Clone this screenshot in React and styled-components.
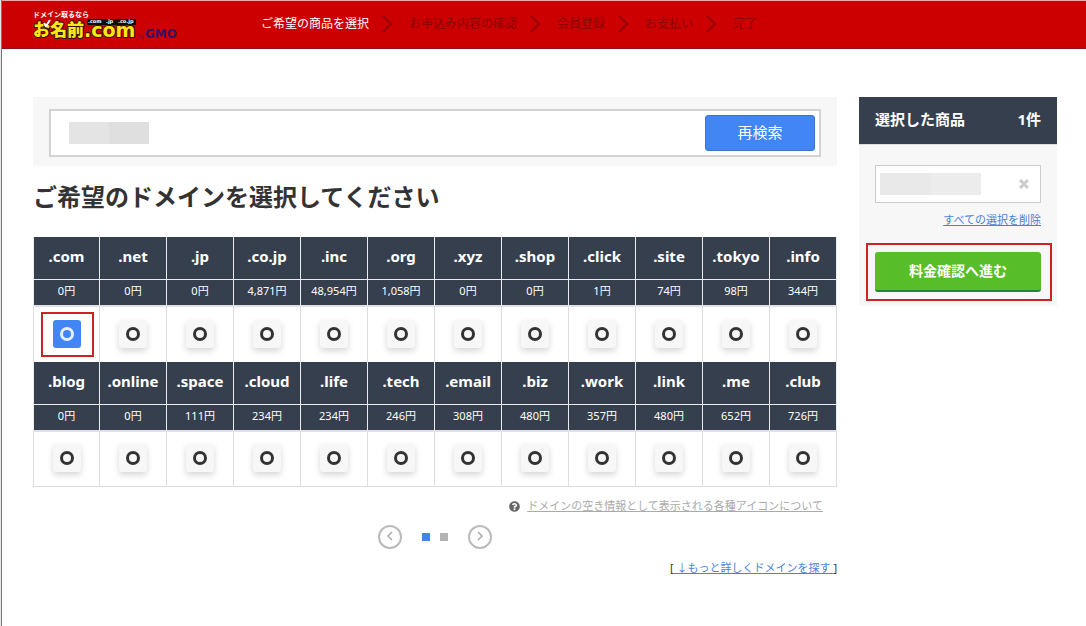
import React, { Fragment, useState } from "react";
import styled, { createGlobalStyle, css } from "styled-components";
import { FaQuestionCircle } from "react-icons/fa";

const GlobalStyle = createGlobalStyle`
  *,
  *::before,
  *::after {
    box-sizing: border-box;
  }

  body {
    margin: 0;
    background: #fff;
    color: #333;
    font-family: "Noto Sans", "Noto Sans CJK JP", sans-serif;
    font-size: 12px;
    line-height: 18px;
  }

  button,
  input {
    font-family: inherit;
  }
`;

const Page = styled.div`
  min-height: 100vh;
  border-left: 1px solid #e8e8e8;
  box-shadow: inset 1px 0 #777;
`;

const Header = styled.header`
  display: flex;
  align-items: center;
  height: 49px;
  margin-left: 1px;
  padding: 0 0 2px 31px;
  border-top: 1px solid #f3a9a9;
  border-bottom: 1px solid #8c1414;
  background: #c00;
`;

const LogoLink = styled.a`
  display: block;
  width: 150px;
  height: 32px;
  margin-right: 78px;
`;

const Steps = styled.ol`
  display: flex;
  align-items: center;
  margin: 0;
  padding: 0;
  list-style: none;
`;

const Step = styled.li`
  display: flex;
  align-items: center;
  color: ${props => (props.$current ? "#fff" : "#8a0505")};
  white-space: nowrap;

  svg {
    margin: 0 17px 0 13px;
  }
`;

const Content = styled.div`
  display: flex;
  align-items: flex-start;
  gap: 22px;
  padding: 48px 29px 32px 32px;
`;

const Main = styled.main`
  flex: 1;
  min-width: 0;
`;

const SearchPanel = styled.div`
  padding: 12px 16px 9px;
  background: #f7f7f7;
`;

const SearchForm = styled.form`
  display: flex;
  align-items: center;
  height: 48px;
  padding: 0 4px 0 18px;
  border: 2px solid #d3d3d3;
  background: #fff;
`;

const Mask = styled.span`
  width: ${props => props.$width}px;
  height: 22px;
  background: linear-gradient(
    90deg,
    ${props => props.$from} 50%,
    ${props => props.$to} 50%
  );
`;

const SearchInput = styled.input`
  flex: 1;
  min-width: 0;
  height: 36px;
  border: 0;
  outline: 0;
  background: transparent;
  font-size: 15px;
`;

const SearchButton = styled.button`
  width: 110px;
  height: 36px;
  padding: 0 0 4px;
  border: 1px solid #3a76cf;
  border-radius: 3px;
  background: #4285f4;
  color: #fff;
  font-size: 15px;
`;

const Title = styled.h1`
  margin: 12px 0 21px;
  color: #333;
  font-size: 24px;
  font-weight: bold;
  line-height: 38px;
`;

const Table = styled.table`
  width: 100%;
  border-collapse: separate;
  border-spacing: 0;
  table-layout: fixed;
  text-align: center;
`;

const darkCell = css`
  padding: 0 0 3px;
  border-right: 1px solid #e9edf2;
  background: #363f4d;
  color: #fff;

  &:first-child {
    border-left: 1px solid #e9edf2;
  }
`;

const NameCell = styled.th`
  ${darkCell}
  height: 43px;
  padding-bottom: 4px;
  border-bottom: 1px solid #e9edf2;
  font-size: 15px;
`;

const PriceCell = styled.td`
  ${darkCell}
  height: 27px;
  border-bottom: 2px solid #dfe1e6;
  font-size: 11px;
`;

const CheckCell = styled.td`
  height: 55px;
  padding: 0 0 2px;
  border-right: 1px solid #ddd;
  border-bottom: ${props => (props.$last ? "1px solid #ddd" : "0")};

  &:first-child {
    border-left: 1px solid #ddd;
  }
`;

const Choice = styled.label`
  position: relative;
  display: inline-block;
  vertical-align: middle;

  &::after {
    content: "";
    position: absolute;
    inset: -8px -13px -9px -12px;
    border: ${props => (props.$framed ? "2px solid #c22" : "0")};
    pointer-events: none;
  }
`;

const Check = styled.input`
  display: grid;
  place-items: center;
  width: 28px;
  height: 28px;
  margin: 0;
  appearance: none;
  border-radius: 3px;
  background: #f7f7f7;
  box-shadow: 0 3px 6px rgba(0, 0, 0, 0.16);
  color: #333;
  cursor: pointer;

  &::before {
    content: "";
    width: 14px;
    height: 14px;
    border: 3px solid currentColor;
    border-radius: 50%;
  }

  &:checked {
    background: #4285f4;
    box-shadow: none;
    color: #e6effe;
  }
`;

const Help = styled.p`
  display: flex;
  align-items: center;
  justify-content: flex-end;
  gap: 7px;
  margin: 10px 14px 10px 0;
  color: #666;
  font-size: 11px;

  a {
    color: #aaa;
  }
`;

const Pager = styled.nav`
  display: flex;
  align-items: center;
  justify-content: center;
  gap: 20px;
`;

const PagerArrow = styled.button`
  display: grid;
  place-items: center;
  width: 24px;
  height: 24px;
  padding: 0 0 2px;
  border: 2px solid #bbb;
  border-radius: 50%;
  background: #fff;
  color: #aaa;
`;

const Dots = styled.div`
  display: flex;
  gap: 10px;
`;

const Dot = styled.button`
  width: 8px;
  height: 8px;
  padding: 0;
  border: 0;
  background: ${props => (props.$active ? "#4285e8" : "#b3b3b3")};
`;

const More = styled.p`
  margin: 10px 0 0;
  color: #333;
  font-size: 11px;
  text-align: right;
  white-space: pre;

  a {
    color: #4a7fdc;
  }
`;

const Cart = styled.aside`
  width: 198px;
  background: #f7f7f7;
`;

const CartHead = styled.h2`
  display: flex;
  justify-content: space-between;
  height: 48px;
  margin: 0;
  padding: 12px 16px;
  border-bottom: 1px solid #ddd;
  background: #363f4d;
  color: #fff;
  font-size: 15px;
  line-height: 20px;
`;

const CartBody = styled.div`
  display: flex;
  flex-direction: column;
  padding: 20px 16px 14px;
`;

const CartItem = styled.div`
  display: flex;
  align-items: center;
  justify-content: space-between;
  height: 38px;
  padding: 0 10px 0 4px;
  border: 1px solid #ccc;
  background: #fff;
`;

const RemoveButton = styled.button`
  display: grid;
  place-items: center;
  width: 12px;
  height: 12px;
  padding: 0;
  border: 0;
  background: none;
  color: #ccc;
`;

const ClearLink = styled.a`
  align-self: flex-end;
  margin: 8px 0 23px;
  color: #4a7fdc;
  font-size: 11px;
`;

const ProceedButton = styled.button`
  position: relative;
  height: 40px;
  padding: 0 0 2px;
  border: 0;
  border-bottom: 2px solid #1d8a35;
  border-radius: 3px;
  background: #57be2a;
  color: #fff;
  font-size: 14px;
  font-weight: bold;

  &::after {
    content: "";
    position: absolute;
    inset: -9px -11px -11px -9px;
    border: 2px solid #c22;
    pointer-events: none;
  }
`;

const steps = [
  "ご希望の商品を選択",
  "お申込み内容の確認",
  "会員登録",
  "お支払い",
  "完了"
];

const groups = [
  [
    [".com", "0"],
    [".net", "0"],
    [".jp", "0"],
    [".co.jp", "4,871"],
    [".inc", "48,954"],
    [".org", "1,058"],
    [".xyz", "0"],
    [".shop", "0"],
    [".click", "1"],
    [".site", "74"],
    [".tokyo", "98"],
    [".info", "344"]
  ],
  [
    [".blog", "0"],
    [".online", "0"],
    [".space", "111"],
    [".cloud", "234"],
    [".life", "234"],
    [".tech", "246"],
    [".email", "308"],
    [".biz", "480"],
    [".work", "357"],
    [".link", "480"],
    [".me", "652"],
    [".club", "726"]
  ]
];

const Logo = () => (
  <svg width="150" height="32" viewBox="0 0 150 32" aria-hidden="true">
    <g fontFamily="Noto Sans CJK JP, sans-serif" fontWeight="bold">
      <text x="0" y="9" fontSize="7" fill="#fff">
        ドメイン取るなら
      </text>
      <text
        x="0"
        y="28"
        fontSize="17"
        fontWeight="900"
        fill="#ffe619"
        stroke="#3b1000"
        strokeWidth="2"
        paintOrder="stroke"
      >
        お名前
      </text>
    </g>
    <path d="M11 15l2 3 4-6" fill="none" stroke="#fff" strokeWidth="2" />
    <g fontFamily="DejaVu Sans, sans-serif" fontWeight="bold">
      <text
        x="51"
        y="29"
        fontSize="19"
        fill="#ffe619"
        stroke="#3b1000"
        strokeWidth="2"
        paintOrder="stroke"
      >
        .com
      </text>
      <rect x="54" y="11" width="49" height="6" fill="#160b0b" />
      <text x="55" y="15" fontSize="5" fill="#fff">
        .com
      </text>
      <text x="73" y="15" fontSize="5" fill="#fff">
        .jp
      </text>
      <text x="85" y="15" fontSize="5" fill="#fff">
        .co.jp
      </text>
    </g>
    <g fontFamily="DejaVu Sans, sans-serif" fill="#3a1260">
      <text x="105" y="30" fontSize="5">
        by
      </text>
      <text x="112" y="30" fontSize="12" fontWeight="bold">
        GMO
      </text>
    </g>
  </svg>
);

const StepArrow = () => (
  <svg width="10" height="18" viewBox="0 0 10 18" aria-hidden="true">
    <path d="M1 1l8 8-8 8" fill="none" stroke="#960808" strokeWidth="2" />
  </svg>
);

const Chevron = ({ d }) => (
  <svg width="8" height="10" viewBox="0 0 8 10" aria-hidden="true">
    <path d={d} fill="none" stroke="currentColor" strokeWidth="1.5" />
  </svg>
);

const App = () => {
  const [selected, setSelected] = useState([".com"]);
  const [page, setPage] = useState(0);

  const toggle = name =>
    setSelected(
      selected.includes(name)
        ? selected.filter(item => item !== name)
        : [...selected, name]
    );

  return (
    <Page>
      <GlobalStyle />
      <Header>
        <LogoLink href="#" aria-label="お名前.com">
          <Logo />
        </LogoLink>
        <Steps>
          {steps.map((step, i) => (
            <Step key={step} $current={i === 0}>
              {step}
              {i < steps.length - 1 && <StepArrow />}
            </Step>
          ))}
        </Steps>
      </Header>
      <Content>
        <Main>
          <SearchPanel>
            <SearchForm onSubmit={e => e.preventDefault()}>
              <Mask $width={80} $from="#e5e4e5" $to="#dfdfdf" />
              <SearchInput type="text" aria-label="ドメイン" />
              <SearchButton type="submit">再検索</SearchButton>
            </SearchForm>
          </SearchPanel>
          <Title>ご希望のドメインを選択してください</Title>
          <Table>
            <tbody>
              {groups.map((group, i) => (
                <Fragment key={i}>
                  <tr>
                    {group.map(([name]) => (
                      <NameCell key={name} scope="col">
                        {name}
                      </NameCell>
                    ))}
                  </tr>
                  <tr>
                    {group.map(([name, price]) => (
                      <PriceCell key={name}>{price}円</PriceCell>
                    ))}
                  </tr>
                  <tr>
                    {group.map(([name]) => (
                      <CheckCell key={name} $last={i === groups.length - 1}>
                        <Choice $framed={name === ".com"}>
                          <Check
                            type="checkbox"
                            aria-label={name}
                            checked={selected.includes(name)}
                            onChange={() => toggle(name)}
                          />
                        </Choice>
                      </CheckCell>
                    ))}
                  </tr>
                </Fragment>
              ))}
            </tbody>
          </Table>
          <Help>
            <FaQuestionCircle size={11} />
            <a href="#">
              ドメインの空き情報として表示される各種アイコンについて
            </a>
          </Help>
          <Pager>
            <PagerArrow aria-label="前へ" onClick={() => setPage(0)}>
              <Chevron d="M6 1L2 5l4 4" />
            </PagerArrow>
            <Dots>
              {[0, 1].map(i => (
                <Dot
                  key={i}
                  $active={page === i}
                  aria-label={`${i + 1}ページ`}
                  onClick={() => setPage(i)}
                />
              ))}
            </Dots>
            <PagerArrow aria-label="次へ" onClick={() => setPage(1)}>
              <Chevron d="M2 1l4 4-4 4" />
            </PagerArrow>
          </Pager>
          <More>
            [<a href="#"> ↓もっと詳しくドメインを探す </a>]
          </More>
        </Main>
        <Cart>
          <CartHead>
            <span>選択した商品</span>
            <span>{selected.length}件</span>
          </CartHead>
          <CartBody>
            <CartItem>
              <Mask $width={101} $from="#e9e9e9" $to="#ececec" />
              <RemoveButton aria-label="削除">
                <svg width="10" height="10" viewBox="0 0 10 10">
                  <path
                    d="M1 1l8 8M9 1L1 9"
                    stroke="currentColor"
                    strokeWidth="3"
                  />
                </svg>
              </RemoveButton>
            </CartItem>
            <ClearLink href="#">すべての選択を削除</ClearLink>
            <ProceedButton>料金確認へ進む</ProceedButton>
          </CartBody>
        </Cart>
      </Content>
    </Page>
  );
};

export default App;
